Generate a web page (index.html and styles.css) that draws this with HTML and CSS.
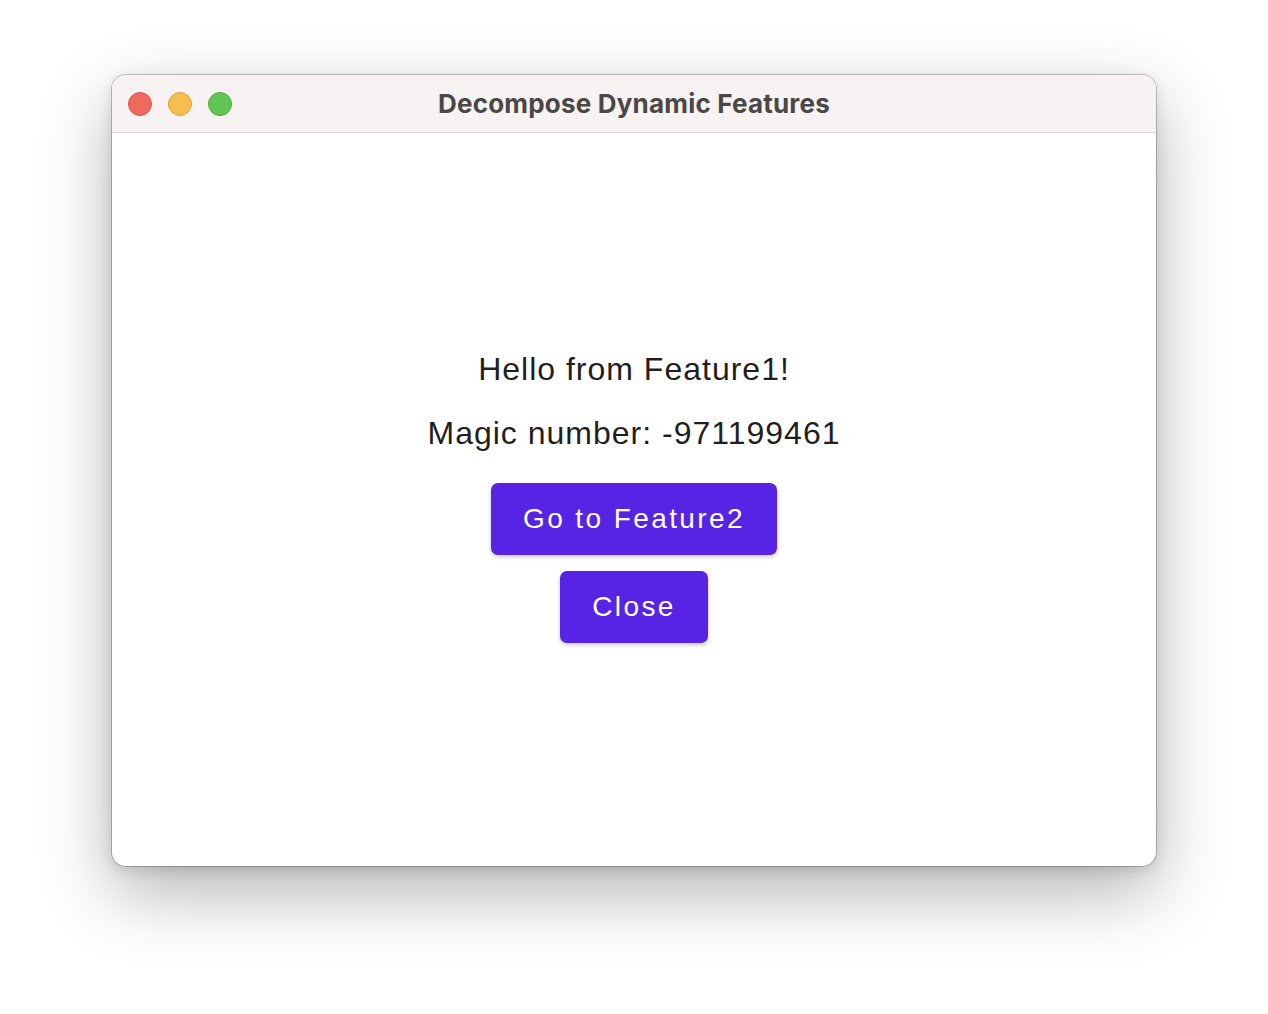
FILE: index.html
```html
<!DOCTYPE html>
<html>
<head>
<meta charset="utf-8">
<link rel="stylesheet" href="styles.css">
</head>
<body>
<div class="window">
  <div class="titlebar">
    <div class="lights">
      <span class="light red"></span>
      <span class="light yellow"></span>
      <span class="light green"></span>
    </div>
    <div class="title">Decompose Dynamic Features</div>
  </div>
  <div class="content">
    <div class="column">
      <div class="text">Hello from Feature1!</div>
      <div class="text">Magic number: -971199461</div>
      <button class="btn first">Go to Feature2</button>
      <button class="btn">Close</button>
    </div>
  </div>
</div>
</body>
</html>
```
FILE: styles.css
```css
html, body {
  margin: 0;
  padding: 0;
  background: #ffffff;
}
body {
  width: 1268px;
  height: 1014px;
  padding-top: 75px;
  box-sizing: border-box;
  overflow: hidden;
}
.window {
  margin-left: 112px;
  width: 1044px;
  height: 791px;
  border-radius: 14px;
  background: #ffffff;
  box-shadow: 0 0 0 1px rgba(0,0,0,0.22), 0 26px 70px rgba(0,0,0,0.30), 0 4px 14px rgba(0,0,0,0.12);
  display: flex;
  flex-direction: column;
  overflow: hidden;
}
.titlebar {
  height: 57px;
  flex: none;
  background: #f6f3f2;
  border-bottom: 1px solid #dcd9d8;
  position: relative;
  display: flex;
  align-items: center;
  justify-content: center;
}
.lights {
  position: absolute;
  left: 16px;
  top: 17px;
  display: flex;
  gap: 16px;
}
.light {
  width: 24px;
  height: 24px;
  border-radius: 50%;
  box-sizing: border-box;
}
.red { background: #ee6a5f; border: 1px solid #d8554b; }
.yellow { background: #f5be4f; border: 1px solid #dca43b; }
.green { background: #61c554; border: 1px solid #4daa41; }
.title {
  font-family: Inter, "Liberation Sans", sans-serif;
  font-weight: 700;
  font-size: 26px;
  letter-spacing: 0.2px;
  color: #4b4747;
}
.content {
  flex: 1;
  display: flex;
  align-items: center;
  justify-content: center;
  padding-bottom: 12px;
}
.column {
  display: flex;
  flex-direction: column;
  align-items: center;
}
.text {
  font-family: "Liberation Sans", Arial, sans-serif;
  font-size: 32px;
  letter-spacing: 1px;
  line-height: 48px;
  color: #1f1f1f;
  margin-bottom: 16px;
}
.btn {
  font-family: "Liberation Sans", Arial, sans-serif;
  font-size: 28px;
  letter-spacing: 2.4px;
  color: #ffffff;
  background: #5723e5;
  border: none;
  border-radius: 7px;
  height: 72px;
  padding: 0 32px;
  box-shadow: 0 2px 4px rgba(0,0,0,0.22);
}
.btn.first {
  margin-top: 10px;
  margin-bottom: 16px;
}
```
